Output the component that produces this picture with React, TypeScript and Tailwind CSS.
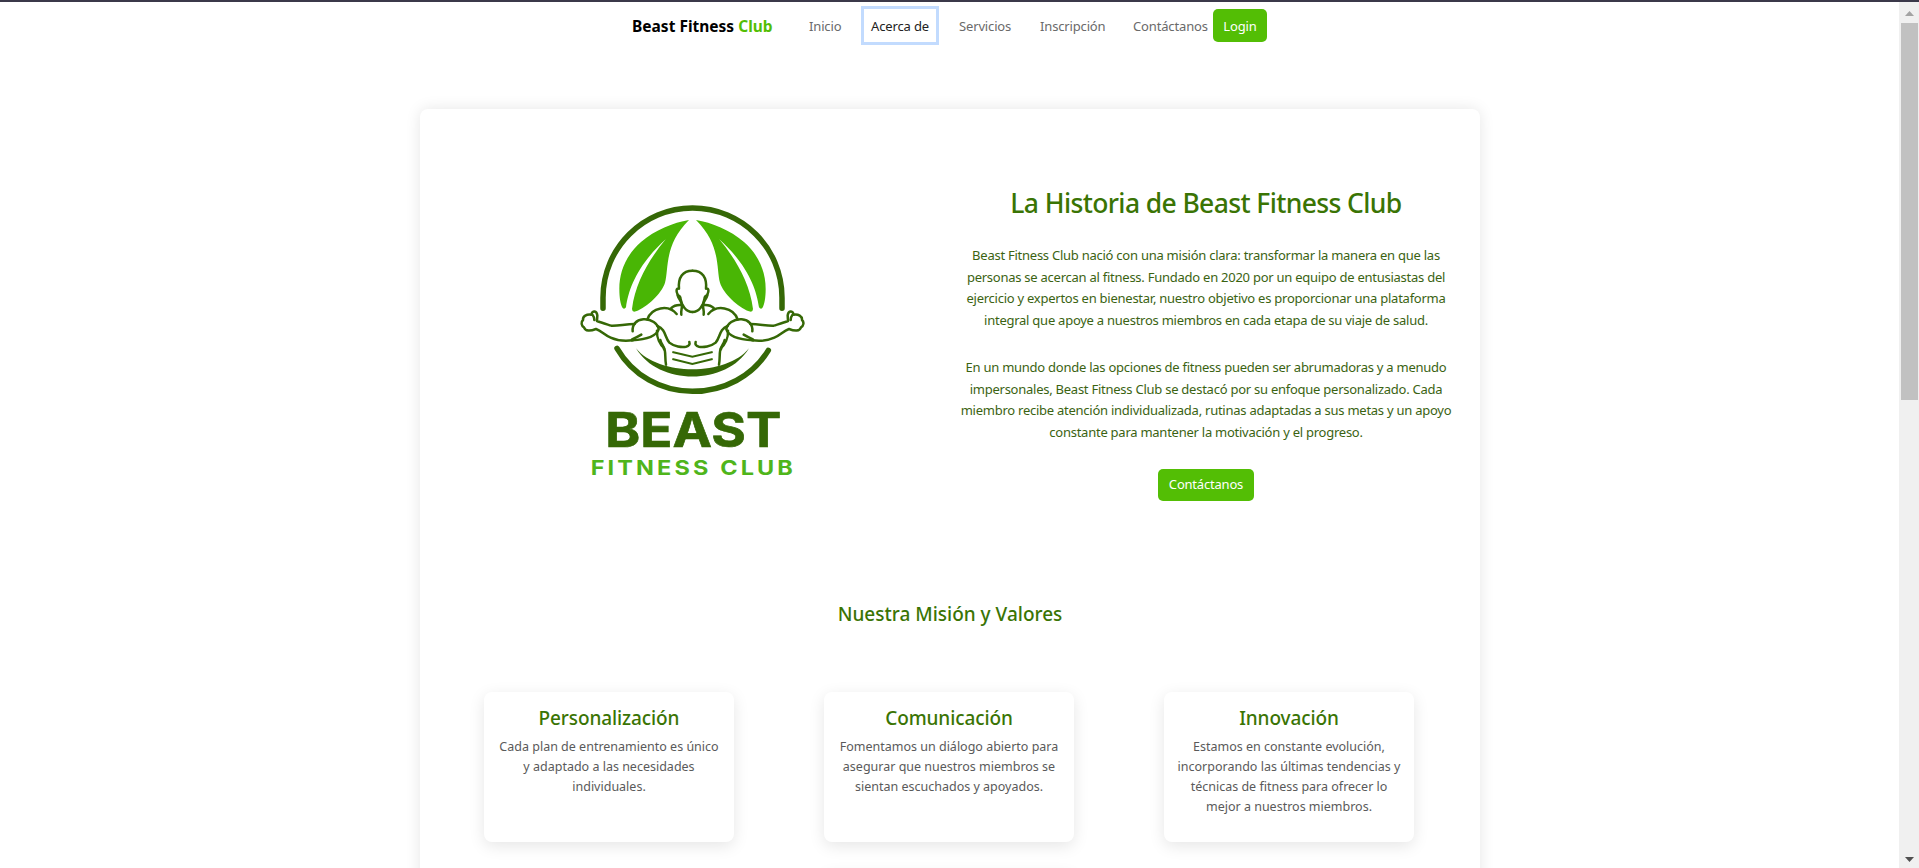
import type { ReactNode } from "react";

function Lines({ lines }: { lines: string[] }) {
  return (
    <>
      {lines.map((line) => (
        <span key={line} className="block whitespace-nowrap">
          {line}
        </span>
      ))}
    </>
  );
}

function Leaf() {
  return (
    <path
      fill="#49b605"
      d="M387 90C340 98 285 120 243 156C198 196 178 245 178 297C178 324 182 345 188 354Q193 359 198 352C206 296 232 225 317 148C270 205 226 275 216 357Q217 369 228 364C262 350 304 312 315 278C327 238 311 165 387 90Z"
    />
  );
}

function HalfBody() {
  return (
    <g>
      {/* head */}
      <path d="M397 242C368 242 354 262 357 296C348 294 348 304 353 314C356 319 361 317 361 324C364 346 378 366 397 366" />
      <path d="M353 316C356 328 366 334 366 346C366 358 362 362 364 374" />
      <path d="M334 354C342 346 352 344 364 345" />
      {/* shoulder */}
      <path d="M262 388C275 352 325 342 350 372" />
      {/* upper arm */}
      <path d="M218 424C216 404 228 390 250 388C274 386 294 402 296 418C290 436 268 448 216 451" />
      <path d="M216 448C226 444 234 440 244 434" />
      {/* forearm and fist */}
      <path d="M224 402C196 402 176 408 154 407C138 402 124 398 111 393L112 376C110 362 98 362 95 370C97 377 103 376 103 390" />
      <path d="M94 374C80 372 68 378 69 390C62 396 64 408 72 412C76 424 90 424 108 417C126 424 134 436 152 443C172 452 196 454 218 451" />
      {/* chest and flank */}
      <path d="M292 408C318 418 314 442 328 458C342 470 366 472 378 470C388 468 390 462 388 456" />
      <path d="M291 422C290 444 300 464 312 474C318 484 314 500 318 524" />
      <path d="M301 450C304 464 312 466 312 478" />
    </g>
  );
}

function Logo() {
  return (
    <svg viewBox="0 0 780 900" className="h-[300px] w-[260px]">
      <g fill="none" stroke="#356806" strokeWidth="16.5" strokeLinecap="round">
        <path d="M129 355V323C129 174 250 54 397.500 54C546 54 666 174 666 323V355" />
        <path d="M171 475C218 556 303 604 397 604C493 604 578 558 625 481" />
      </g>
      <Leaf />
      <g transform="translate(795 0) scale(-1 1)">
        <Leaf />
      </g>
      <path fill="#356806" d="M228 475C295 588 500 588 567 475C500 559 295 559 228 475Z" />
      <g fill="none" stroke="#356806" strokeWidth="7.5" strokeLinecap="round" strokeLinejoin="round">
        <HalfBody />
        <g transform="translate(795 0) scale(-1 1)">
          <HalfBody />
        </g>
      </g>
      <g fill="none" stroke="#356806" strokeWidth="6">
        <path d="M337 486L397 500L458 486" />
        <path d="M337 507L397 522L458 507" />
      </g>
      <text
        x="136"
        y="771"
        textLength="528"
        lengthAdjust="spacingAndGlyphs"
        className="fill-[#356806] stroke-[#356806] stroke-2 font-['Inter',sans-serif] text-[145px] font-bold"
      >
        BEAST
      </text>
      <text
        x="92"
        y="855"
        textLength="616"
        lengthAdjust="spacingAndGlyphs"
        className="fill-[#4fb51b] font-['Inter',sans-serif] text-[60px] font-bold tracking-[8px]"
      >
        FITNESS CLUB
      </text>
    </svg>
  );
}

function Navbar() {
  return (
    <nav className="flex h-[46px] items-center justify-center text-[13px] leading-5 tracking-[-0.15px] text-[#6a6a6a]">
      <a className="w-[177px] pt-[2px] text-[15.5px] font-bold tracking-normal whitespace-nowrap text-black">
        Beast Fitness <span className="text-[#53be05]">Club</span>
      </a>
      <a className="w-[52px] pt-[2px]">Inicio</a>
      <a className="flex h-[39px] w-[78px] items-center justify-center border-[3px] border-[#c2dbfe] pt-px whitespace-nowrap text-[#222]">
        Acerca de
      </a>
      <a className="ml-5 w-[81px] pt-[2px]">Servicios</a>
      <a className="w-[93px] pt-[2px]">Inscripción</a>
      <a className="w-[80px] pt-[2px]">Contáctanos</a>
      <a className="flex h-[33px] w-[54px] items-center justify-center rounded-[5px] bg-[#53be05] pt-px text-white">
        Login
      </a>
    </nav>
  );
}

function Hero() {
  return (
    <section className="flex items-start pl-[140px]">
      <div className="mt-[81px]">
        <Logo />
      </div>
      <div className="mt-[77px] ml-[136px] flex w-[500px] flex-col items-center text-center text-[13px] leading-[21.5px] tracking-[-0.25px] text-[#3b6312]">
        <h1 className="text-[26.5px] leading-[34px] font-medium tracking-[-0.62px] whitespace-nowrap text-[#3a7404]">
          La Historia de Beast Fitness Club
        </h1>
        <p className="mt-[25px]">
          <Lines
            lines={[
              "Beast Fitness Club nació con una misión clara: transformar la manera en que las",
              "personas se acercan al fitness. Fundado en 2020 por un equipo de entusiastas del",
              "ejercicio y expertos en bienestar, nuestro objetivo es proporcionar una plataforma",
              "integral que apoye a nuestros miembros en cada etapa de su viaje de salud.",
            ]}
          />
        </p>
        <p className="mt-[26px]">
          <Lines
            lines={[
              "En un mundo donde las opciones de fitness pueden ser abrumadoras y a menudo",
              "impersonales, Beast Fitness Club se destacó por su enfoque personalizado. Cada",
              "miembro recibe atención individualizada, rutinas adaptadas a sus metas y un apoyo",
              "constante para mantener la motivación y el progreso.",
            ]}
          />
        </p>
        <button className="mt-[26px] h-8 w-24 rounded-[5px] bg-[#53be05] tracking-[-0.2px] text-white">
          Contáctanos
        </button>
      </div>
    </section>
  );
}

function ValueCard({ title, children }: { title?: string; children?: ReactNode }) {
  return (
    <article className="h-[150px] w-[250px] rounded-lg bg-white pt-[14px] text-center shadow-[0_4px_16px_rgba(0,0,0,0.1)]">
      <h3 className="text-[19px] leading-6 font-medium tracking-[-0.1px] text-[#3a7404]">{title}</h3>
      <p className="mt-[7px] text-[12.5px] leading-5 text-[#5a5a5a]">{children}</p>
    </article>
  );
}

function Scrollbar() {
  return (
    <aside className="flex w-5 shrink-0 flex-col items-center bg-[#f0f0f0]">
      <svg viewBox="0 0 9 5" className="mt-[9px] h-[5px] w-[9px] fill-[#a3a3a3]">
        <path d="M4.5 0L9 5H0Z" />
      </svg>
      <div className="mt-[7px] h-[377px] w-[17px] bg-[#c1c1c1]" />
      <svg viewBox="0 0 9 5" className="mt-auto mb-[6px] h-[5px] w-[9px] fill-[#505050]">
        <path d="M0 0H9L4.5 5Z" />
      </svg>
    </aside>
  );
}

export default function App() {
  return (
    <div className="flex h-[868px] w-full flex-col overflow-hidden bg-white font-['Noto_Sans',sans-serif]">
      <div className="h-[2px] shrink-0 bg-[#3b394a]" />
      <div className="flex min-h-0 flex-1">
        <main className="min-w-0 flex-1 overflow-hidden">
          <Navbar />
          <div className="mt-[61px] pl-px">
            <div className="mx-auto h-[1100px] w-[1060px] rounded-lg bg-white shadow-[0_0_15px_rgba(0,0,0,0.1)]">
              <Hero />
              <h2 className="mt-[101px] text-center text-[19px] leading-6 font-medium text-[#3a7404]">
                Nuestra Misión y Valores
              </h2>
              <div className="mt-[66px] grid grid-cols-[repeat(3,250px)] gap-x-[90px] gap-y-[30px] pl-16">
                <ValueCard title="Personalización">
                  <Lines
                    lines={["Cada plan de entrenamiento es único", "y adaptado a las necesidades", "individuales."]}
                  />
                </ValueCard>
                <ValueCard title="Comunicación">
                  <Lines
                    lines={[
                      "Fomentamos un diálogo abierto para",
                      "asegurar que nuestros miembros se",
                      "sientan escuchados y apoyados.",
                    ]}
                  />
                </ValueCard>
                <ValueCard title="Innovación">
                  <Lines
                    lines={[
                      "Estamos en constante evolución,",
                      "incorporando las últimas tendencias y",
                      "técnicas de fitness para ofrecer lo",
                      "mejor a nuestros miembros.",
                    ]}
                  />
                </ValueCard>
                <div className="col-start-2">
                  <ValueCard />
                </div>
              </div>
            </div>
          </div>
        </main>
        <Scrollbar />
      </div>
    </div>
  );
}
